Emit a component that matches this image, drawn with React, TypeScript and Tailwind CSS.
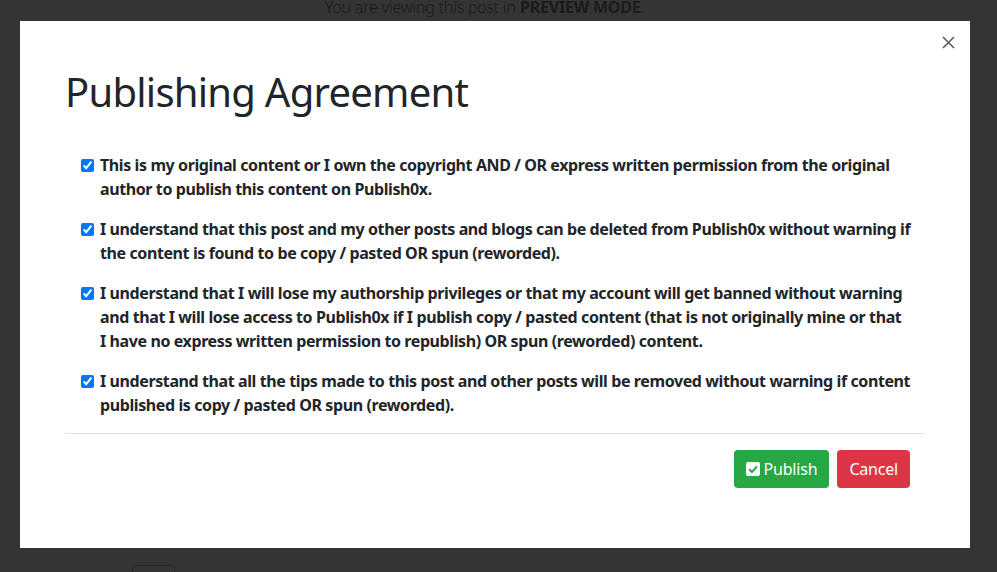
import React from "react";

const items: string[][] = [
  [
    "This is my original content or I own the copyright AND / OR express written permission from the original",
    "author to publish this content on Publish0x.",
  ],
  [
    "I understand that this post and my other posts and blogs can be deleted from Publish0x without warning if",
    "the content is found to be copy / pasted OR spun (reworded).",
  ],
  [
    "I understand that I will lose my authorship privileges or that my account will get banned without warning",
    "and that I will lose access to Publish0x if I publish copy / pasted content (that is not originally mine or that",
    "I have no express written permission to republish) OR spun (reworded) content.",
  ],
  [
    "I understand that all the tips made to this post and other posts will be removed without warning if content",
    "published is copy / pasted OR spun (reworded).",
  ],
];

function CheckSquare() {
  return (
    <svg width="14" height="14" viewBox="0 0 14 14" className="shrink-0">
      <rect x="0" y="0" width="14" height="14" rx="2" fill="#ffffff" />
      <path d="M3.2 7.2 L6 10 L11 4.4" fill="none" stroke="#28a745" strokeWidth="2" />
    </svg>
  );
}

export default function App() {
  return (
    <div
      className="relative h-[572px] w-[997px] overflow-hidden bg-[#343434] text-[#212529]"
      style={{ fontFamily: '"Noto Sans", "Open Sans", sans-serif' }}
    >
      <div className="h-[21px] overflow-hidden pr-[28px] text-center">
        <p className="-mt-[5px] text-[16px] font-light tracking-[-0.2px] text-[#1b1b1b]">
          You are viewing this post in <span className="font-bold">PREVIEW MODE</span>.
        </p>
      </div>

      <div className="relative ml-[20px] h-[527px] w-[950px] bg-white">
        <button className="absolute right-[15px] top-[15px] text-[#555]">
          <svg width="13" height="13" viewBox="0 0 13 13">
            <path d="M1 1 L12 12 M12 1 L1 12" stroke="currentColor" strokeWidth="1.5" />
          </svg>
        </button>

        <div className="px-[45px] pt-[43px]">
          <h1 className="text-[40px] leading-[56px] font-normal tracking-[-0.75px]">
            Publishing Agreement
          </h1>
        </div>

        <div className="flex flex-col gap-4 pl-[61px] pt-[33px]">
          {items.map((lines, i) => (
            <label key={i} className="flex items-start gap-[6px]">
              <input
                type="checkbox"
                defaultChecked
                className="mt-[6px] h-[13px] w-[13px] shrink-0 accent-[#0075ff]"
              />
              <span className="text-[16px] leading-6 font-bold tracking-[-0.4px]">
                {lines.map((l, j) => (
                  <span key={j} className="block whitespace-nowrap">
                    {l}
                  </span>
                ))}
              </span>
            </label>
          ))}
        </div>

        <div className="mx-[45px] mt-[16px] border-t border-[#dee2e6]" />

        <div className="flex justify-end gap-2 pr-[60px] pt-[16px]">
          <button className="flex h-[38px] items-center gap-[4px] rounded-[4px] bg-[#28a745] px-[12px] text-[16px] tracking-[-0.2px] text-white">
            <CheckSquare />
            Publish
          </button>
          <button className="h-[38px] rounded-[4px] bg-[#dc3545] px-[12px] text-[16px] tracking-[-0.2px] text-white">
            Cancel
          </button>
        </div>
      </div>

      <div className="absolute left-[132px] top-[565px] h-[12px] w-[43px] rounded-[2px] border border-[#2a2a2a]" />
    </div>
  );
}
